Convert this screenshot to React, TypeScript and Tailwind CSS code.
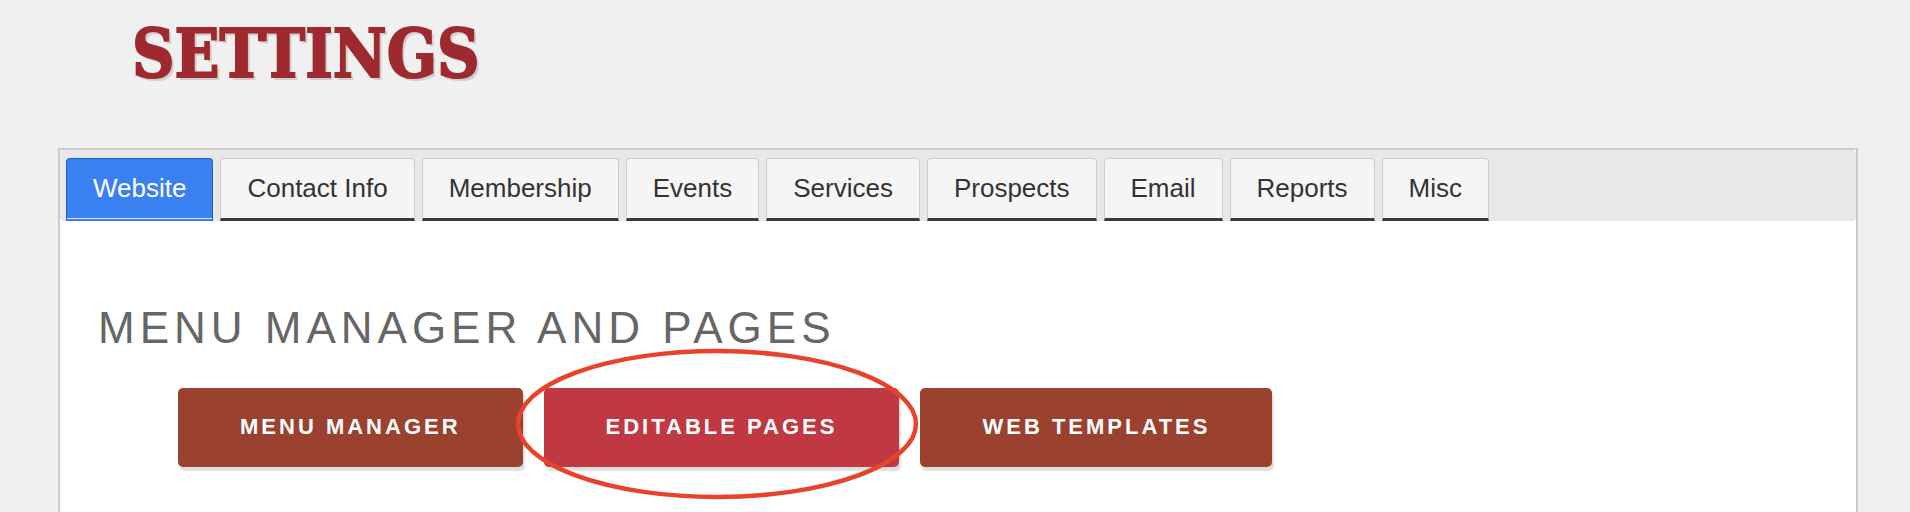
import React from "react";

const tabs = ["Website", "Contact Info", "Membership", "Events", "Services", "Prospects", "Email", "Reports", "Misc"];

const App = () => {
    return (
        <div className="w-full min-h-[512px] bg-[#f0f0f0] overflow-hidden" style={{ fontFamily: '"Liberation Sans", Arial, sans-serif' }}>
            <div className="pl-[132px] pt-[20px] h-[148px]">
                <h1
                    className="inline-block origin-left scale-x-[0.88] text-[67px] leading-none font-bold text-[#9e2a2f] [-webkit-text-stroke:2px_#9e2a2f] [text-shadow:3px_3px_0_#cfcfcf]"
                    style={{ fontFamily: '"DejaVu Serif", serif' }}
                >
                    SETTINGS
                </h1>
            </div>

            <div className="ml-[58px] mr-[52px] border-2 border-[#cccccc] bg-white min-h-[400px]">
                <div className="bg-[#e8e8e8] rounded-[4px] flex items-end gap-[7px] pl-[6px] pt-[8px]">
                    {tabs.map((tab, i) =>
                        i === 0 ? (
                            <div key={tab} className="h-[63px] flex flex-col bg-[#3a80f2] border border-[#1f5fd6] border-b-0 rounded-t-[4px]">
                                <div className="flex-1 flex items-center px-[26px] text-[26px] text-white">{tab}</div>
                                <div className="h-px bg-[#dfe9fb]"></div>
                                <div className="h-[2px] bg-[#3a80f2]"></div>
                            </div>
                        ) : (
                            <div key={tab} className="h-[63px] flex items-center px-[26px] text-[26px] text-[#333333] bg-[#f5f5f5] border border-[#cccccc] border-b-[3px] border-b-[#3a3a3a] rounded-t-[4px]">
                                {tab}
                            </div>
                        )
                    )}
                </div>

                <div className="pl-[38px] pt-[85px]">
                    <h2 className="text-[44px] leading-none tracking-[5px] text-[#666666]">MENU MANAGER AND PAGES</h2>
                    <div className="relative flex gap-[21px] pl-[80px] mt-[38px]">
                        <button className="h-[79px] pb-[2px] px-[62px] rounded-[5px] bg-[#9a412f] text-white font-bold text-[22px] tracking-[3px] shadow-[2px_4px_2px_rgba(0,0,0,0.13)]">MENU MANAGER</button>
                        <button className="h-[79px] pb-[2px] px-[62px] rounded-[5px] bg-[#bf3842] text-white font-bold text-[22px] tracking-[3px] shadow-[2px_4px_2px_rgba(0,0,0,0.13)]">EDITABLE PAGES</button>
                        <button className="h-[79px] pb-[2px] px-[62px] rounded-[5px] bg-[#9a412f] text-white font-bold text-[22px] tracking-[3px] shadow-[2px_4px_2px_rgba(0,0,0,0.13)]">WEB TEMPLATES</button>
                        <svg className="absolute left-[417px] top-[-40px] pointer-events-none" width="404" height="152" viewBox="0 0 404 152">
                            <ellipse cx="202" cy="76" rx="199" ry="73" fill="none" stroke="#e6432a" strokeWidth="4.5" />
                        </svg>
                    </div>
                </div>
            </div>
        </div>
    );
};

export default App;
